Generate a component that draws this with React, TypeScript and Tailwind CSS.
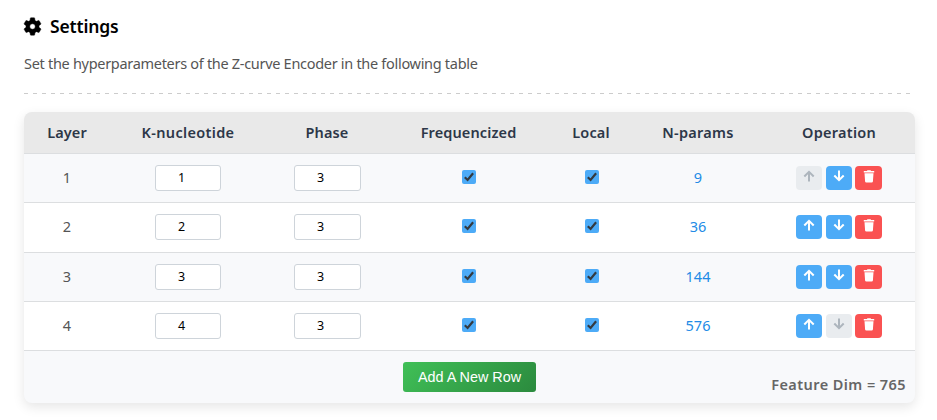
import React from "react";

const GRID = "grid grid-cols-[86px_156px_122px_161px_84px_130px_152px] items-center justify-items-center";

const rows = [
  { layer: 1, k: 1, phase: 3, params: 9, height: "h-[49px]" },
  { layer: 2, k: 2, phase: 3, params: 36, height: "h-[50px] pb-px" },
  { layer: 3, k: 3, phase: 3, params: 144, height: "h-[49px]" },
  { layer: 4, k: 4, phase: 3, params: 576, height: "h-[49px]" },
];

const headers = [
  { label: "Layer", tracking: "tracking-[0.1px]" },
  { label: "K-nucleotide", tracking: "tracking-[0.33px]" },
  { label: "Phase", tracking: "tracking-[0.1px]" },
  { label: "Frequencized", tracking: "tracking-[0.12px]" },
  { label: "Local", tracking: "tracking-[0.15px]" },
  { label: "N-params", tracking: "tracking-[0.25px]" },
  { label: "Operation", tracking: "tracking-[0.25px]" },
];

function Gear() {
  return (
    <svg className="-mt-[2px] -ml-px h-[19px] w-[19px] shrink-0" viewBox="1.5 1.5 21 21" fill="#000" stroke="#000" strokeWidth="0.5">
      <path d="M19.14 12.94c.04-.3.06-.61.06-.94s-.02-.64-.07-.94l2.03-1.58a.49.49 0 0 0 .12-.61l-1.92-3.32a.49.49 0 0 0-.59-.22l-2.39.96a7 7 0 0 0-1.62-.94l-.36-2.54a.48.48 0 0 0-.48-.41h-3.84a.48.48 0 0 0-.47.41l-.36 2.54a7.4 7.4 0 0 0-1.62.94l-2.39-.96a.48.48 0 0 0-.59.22L2.74 8.87a.48.48 0 0 0 .12.61l2.03 1.58a6 6 0 0 0 0 1.88l-2.03 1.58a.49.49 0 0 0-.12.61l1.92 3.32c.12.22.37.29.59.22l2.39-.96c.5.38 1.03.7 1.62.94l.36 2.54c.05.24.24.41.48.41h3.84c.24 0 .44-.17.47-.41l.36-2.54a7.4 7.4 0 0 0 1.62-.94l2.39.96c.22.08.47 0 .59-.22l1.92-3.32a.48.48 0 0 0-.12-.61zM12 15a3 3 0 1 1 0-6 3 3 0 0 1 0 6z" />
    </svg>
  );
}

function Arrow({ down }: { down?: boolean }) {
  return (
    <svg className={down ? "h-3 w-3 rotate-180" : "h-3 w-3"} viewBox="0 0 12 12" fill="none" stroke="currentColor" strokeWidth="2">
      <path d="M6 11.4V1.8M1.3 6.5 6 1.8l4.7 4.7" />
    </svg>
  );
}

function Trash() {
  return (
    <svg className="h-[13px] w-3" viewBox="0 0 12 13" fill="currentColor">
      <path d="M.8 1h3l.7-.8h3l.7.8h3v1.4H.8zM1.5 3.2h9l-.6 8.2a1.2 1.2 0 0 1-1.2 1.1H3.3a1.2 1.2 0 0 1-1.2-1.1z" />
    </svg>
  );
}

function MoveButton({ down, disabled }: { down?: boolean; disabled?: boolean }) {
  return (
    <button
      disabled={disabled}
      className={
        "flex h-6 w-[26px] items-start justify-center rounded-[4px] pt-1 " +
        (disabled ? "bg-[#e9ecef] text-[#adb5bd]" : "bg-[#4dabf7] text-white")
      }
    >
      <Arrow down={down} />
    </button>
  );
}

function Check({ className = "" }: { className?: string }) {
  return (
    <span className={"mb-[3px] flex h-[14px] w-[14px] items-center justify-center rounded-[2px] bg-[#4dabf7] " + className}>
      <svg className="h-[14px] w-[14px]" viewBox="0 0 14 14" fill="none" stroke="#343a40" strokeWidth="2.2">
        <path d="M2.8 7.3 5.6 10l5.5-6.8" />
      </svg>
    </span>
  );
}

function NumberBox({ value, wide }: { value: number; wide?: boolean }) {
  return (
    <div
      className={
        "flex h-[26px] items-center justify-center rounded-[3px] border border-[#ced4da] bg-white pr-[13px] text-[12.5px] text-black " +
        (wide ? "w-[67px]" : "w-[66px]")
      }
    >
      {value}
    </div>
  );
}

export default function App() {
  return (
    <main className="h-[420px] w-[937px] overflow-hidden whitespace-nowrap bg-white pl-6 pt-4 font-['Noto_Sans','Open_Sans',sans-serif]">
      <h2 className="flex h-[22px] items-center text-[17.5px] font-semibold leading-[22px] tracking-[-0.15px] text-black">
        <Gear />
        <span className="ml-2 pb-[2px]">Settings</span>
      </h2>
      <p className="mt-[14px] h-[23px] text-[14.5px] leading-[22px] tracking-[-0.3px] text-[#555]">
        Set the hyperparameters of the Z-curve Encoder in the following table
      </p>
      <div className="mt-[18px] h-px w-[889px] bg-[repeating-linear-gradient(90deg,#ccc_0_4px,transparent_4px_9px)]" />

      <section className="mt-[18px] w-[891px] overflow-hidden rounded-lg bg-[#f8f9fb] shadow-[0_4px_12px_rgba(0,0,0,0.1)]">
        <div className={GRID + " h-[42px] border-b border-[#dcdee0] bg-[#e9e9e9] text-[14.5px] font-semibold text-[#2d3748]"}>
          {headers.map((h) => (
            <span key={h.label} className={h.tracking}>{h.label}</span>
          ))}
        </div>
        {rows.map((row, i) => (
          <div key={row.layer} className={GRID + " border-b border-[#dcdee0] text-[14.5px] " + row.height + (i % 2 ? " bg-white" : " bg-[#f8f9fb]")}>
            <span className="text-[#555]">{row.layer}</span>
            <NumberBox value={row.k} />
            <NumberBox value={row.phase} wide />
            <Check />
            <Check className="ml-px" />
            <span className="text-[#228be6]">{row.params}</span>
            <div className="flex">
              <MoveButton disabled={i === 0} />
              <span className="w-1" />
              <MoveButton down disabled={i === rows.length - 1} />
              <span className="w-[3px]" />
              <button className="flex h-6 w-[27px] items-start justify-center rounded-[4px] bg-[#fa5252] pt-[4px] text-white">
                <Trash />
              </button>
            </div>
          </div>
        ))}
        <div className="grid h-[52px] grid-cols-[379px_133px_1fr] items-start">
          <span />
          <button className="mt-[11px] h-[30px] rounded-[3px] bg-linear-135 from-[#40c057] to-[#2b8a3e] pt-px font-['Liberation_Sans',Arial,sans-serif] text-[14.4px] text-white">
            Add A New Row
          </button>
          <div className="flex justify-end pr-[9px] pt-[23px] text-[14.5px] font-semibold leading-5 tracking-[0.43px] text-[#666]">
            Feature Dim = 765
          </div>
        </div>
      </section>
    </main>
  );
}
